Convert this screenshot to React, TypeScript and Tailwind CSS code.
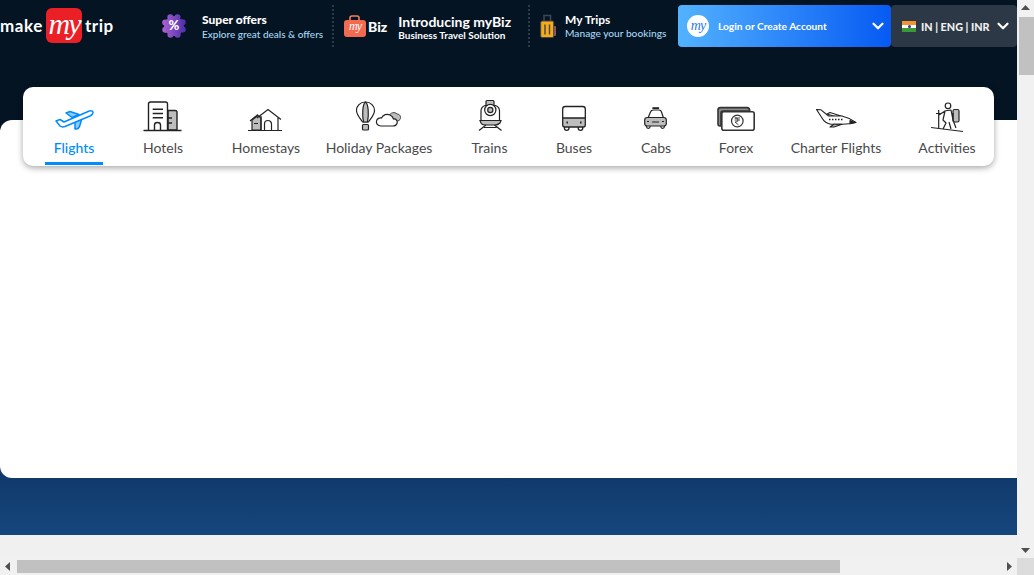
import React from 'react';
import { ChevronDown } from 'lucide-react';

const ink = '#222';
const grey = '#bdbdbd';

function FlightsIcon() {
  return (
    <svg width="40" height="36" viewBox="54 98 40 36" fill="none" stroke="#008cff" strokeWidth="1.5" strokeLinejoin="round">
      <g transform="translate(54 107)">
        <path d="M12 6 L16 4.5 L25 7.5 L18 10.5 Z" fill="#8ccbff" />
        <path d="M21 14 L28 11 L26 18 Q25 22 22 22 L21 22 Z" fill="#8ccbff" />
        <path d="M2 14 L6 12.5 L10 15 L33 5 Q38 2.5 39 5 Q39.5 7 36 9 L11 19.5 Q8 20.5 6 19 Z" fill="#fff" />
      </g>
    </svg>
  );
}

function HotelsIcon() {
  return (
    <svg width="40" height="36" viewBox="143 98 40 36" fill="none" stroke={ink} strokeWidth="1.4">
      <path d="M168 110.5 H175 Q177 110.5 177 112.5 V130 H168 Z" fill={grey} />
      <path d="M148.5 130 V104 Q148.5 102 150.5 102 H165.5 Q167.5 102 167.5 104 V130" />
      <path d="M152.7 109.3 H163 M152.7 113.5 H163 M152.7 117.7 H163 M168 118 H172 M168 123 H172" />
      <path d="M154.5 130 V125 Q154.5 122.5 157.5 122.5 Q160.5 122.5 160.5 125 V130" />
      <path d="M143.5 130.5 H181.5" />
    </svg>
  );
}

function HomestaysIcon() {
  return (
    <svg width="36" height="36" viewBox="248 98 36 36" fill="none" stroke={ink} strokeWidth="1.2">
      <path d="M252 130 V120 L258 115.5 L261 118 V130 Z" fill={grey} />
      <path d="M250 121 L258 114.5 M254 123.5 H258" />
      <path d="M257 118 L268 109.5 L281 119.5 M261 116 V130 M278 117 V130" />
      <path d="M264.5 130 V124 a3.5 3.5 0 0 1 7 0 V130" />
      <path d="M248 130.5 H282" />
    </svg>
  );
}

function HolidayIcon() {
  return (
    <svg width="46" height="36" viewBox="357 98 46 36" fill="none" stroke={ink} strokeWidth="1.2">
      <path d="M366.5 102 C361 102 357.5 106 357.5 110.5 C357.5 115 361 118 363.5 122 H369.5 C372 118 375.5 115 375.5 110.5 C375.5 106 372 102 366.5 102 Z" />
      <path d="M366.5 102 C363.5 104 363 115 364.5 122 H368.5 C370 115 369.5 104 366.5 102 Z" fill={grey} />
      <rect x="363.5" y="124.5" width="6" height="5.5" rx="1" fill={grey} />
      <path d="M390 116 C391 112.5 396 111.5 398 114 C401 114 402.5 117 401 119.5 C400 121 398 121.3 396 121 Z" fill={grey} strokeWidth="0.8" />
      <path d="M382 126 C378.5 126 377 123.5 377.5 121 C378 118.5 380.5 117.5 382.5 118 C384 114.5 388 113.5 391 115 C393 116 394 117.5 394.5 119 C397 118.5 399 121 398 123.5 C397 126 395 126 394 126 Z" fill="#fff" />
    </svg>
  );
}

function TrainsIcon() {
  return (
    <svg width="24" height="36" viewBox="477 98 24 36" fill="none" stroke={ink} strokeWidth="1.2">
      <path d="M485 105 V101.5 Q485 100.5 486 100.5 H492 Q493 100.5 493 101.5 V105" fill={grey} />
      <path d="M480 121 V111 Q480 107 484 105.5 H494.5 Q498.5 107 498.5 111 V121 Z" fill="#fff" />
      <circle cx="489.3" cy="110" r="5.6" fill="#fff" />
      <circle cx="489.3" cy="110" r="2.6" fill={grey} />
      <path d="M479 120.5 H500 L499 123 Q497 125 494 125 H484 Q481 125 480 123 Z" fill={grey} />
      <path d="M485 125 L478 130.5 M493.5 125 L500.5 130.5 M483 127.5 H495.5" />
    </svg>
  );
}

function BusesIcon() {
  return (
    <svg width="26" height="36" viewBox="561 98 26 36" fill="none" stroke={ink} strokeWidth="1.3">
      <circle cx="566.7" cy="128" r="2.3" fill="#fff" />
      <circle cx="580.5" cy="128" r="2.3" fill="#fff" />
      <path d="M562.7 118 V109 Q562.7 106.5 565.2 106.5 H582.8 Q585.3 106.5 585.3 109 V118" />
      <path d="M562.7 118 H585.3 V125 Q585.3 127 583.3 127 H564.7 Q562.7 127 562.7 125 Z" fill={grey} />
      <path d="M566.5 122.5 H568 M580 122.5 H581.5" strokeWidth="2" />
    </svg>
  );
}

function CabsIcon() {
  return (
    <svg width="24" height="36" viewBox="644 98 24 36" fill="none" stroke={ink} strokeWidth="1.2">
      <path d="M653 109 V107.8 H658.5 V109" fill={ink} />
      <path d="M648 118 L650.5 112 Q651 110 653.5 110 H659 Q661 110 661.5 112 L663.5 118" fill="#fff" />
      <circle cx="648.3" cy="126.5" r="1.8" fill="#fff" />
      <circle cx="662.6" cy="126.5" r="1.8" fill="#fff" />
      <rect x="644.7" y="117.5" width="21.6" height="8.5" rx="2.5" fill={grey} />
      <path d="M652 122 H659 M647 121.5 H649 M662 121.5 H664" />
    </svg>
  );
}

function ForexIcon() {
  return (
    <svg width="40" height="36" viewBox="716 98 40 36" fill="none" stroke="#333" strokeWidth="1.6">
      <path d="M721 126 H720 Q718 126 718 124 V110 Q718 107.6 720.5 107.6 H747 Q749.5 107.6 749.8 111 H723 Q721 111 721 113 Z" fill="#8d8d8d" />
      <rect x="721.8" y="111.8" width="32.4" height="18.4" rx="2" fill="#fff" />
      <circle cx="737.3" cy="121" r="5.8" strokeWidth="1.2" />
      <path d="M734.6 118 H740 M734.6 120 H740 M735 118 H736 a2 2 0 0 1 0 4 H735 L738.5 125" strokeWidth="0.9" />
    </svg>
  );
}

function CharterIcon() {
  return (
    <svg width="42" height="36" viewBox="815 98 42 36" fill="none" stroke={ink} strokeWidth="1.1" strokeLinejoin="round">
      <path d="M827 114 L830 112.5 L841 116 L835 116.5 Z" fill="#fff" />
      <path d="M816.5 109.5 L821 109.8 L828.5 116 L842 116 Q850 118 856 122.5 Q850 124.2 842 124.2 L831 124.2 Q825 123.5 822 118 Z" fill="#fff" />
      <path d="M830 127 L834 124.2 L842 124.2 L834 127 Z" fill={grey} />
      <path d="M829 119.5 H843" strokeDasharray="1.5 1.5" strokeWidth="1.4" />
      <path d="M850 120.5 L855 122.5 L850 123.6 Z" fill={ink} />
    </svg>
  );
}

function ActivitiesIcon() {
  return (
    <svg width="34" height="36" viewBox="932 98 34 36" fill="none" stroke={ink} strokeWidth="1.2" strokeLinejoin="round">
      <circle cx="950" cy="105.8" r="2.8" />
      <rect x="955" y="109.5" width="6" height="12.5" rx="1.5" fill={grey} />
      <path d="M946.5 111 L953 110 L955 120 L958 128 M947 111 L945 120 L948 123 L945 129 M951 122 L953 129 M947 111 L941 115 M955 113 V120" />
      <path d="M940.7 110 V128 M938 113.5 H943" />
      <path d="M933 127.5 L965 131.5" />
    </svg>
  );
}

const tabs = [
  { label: 'Flights', width: 'w-[58px]', icon: <FlightsIcon />, active: true },
  { label: 'Hotels', width: 'w-[120px]', icon: <HotelsIcon /> },
  { label: 'Homestays', width: 'w-[86px]', icon: <HomestaysIcon /> },
  { label: 'Holiday Packages', width: 'w-[140px]', icon: <HolidayIcon /> },
  { label: 'Trains', width: 'w-[81px]', icon: <TrainsIcon /> },
  { label: 'Buses', width: 'w-[88px]', icon: <BusesIcon /> },
  { label: 'Cabs', width: 'w-[76px]', icon: <CabsIcon /> },
  { label: 'Forex', width: 'w-[84px]', icon: <ForexIcon /> },
  { label: 'Charter Flights', width: 'w-[116px]', icon: <CharterIcon /> },
  { label: 'Activities', width: 'w-[94px] ml-[6px]', icon: <ActivitiesIcon /> },
];

function Logo() {
  return (
    <div className="flex items-center w-[162px] h-[35px] text-white text-[17px] font-bold tracking-[0.6px]">
      <span className="w-[46px]">make</span>
      <span className="w-[36px] h-[35px] rounded-md bg-[#eb2026] flex items-center justify-center text-[30px] leading-none italic font-normal font-['Liberation_Serif'] pb-1 tracking-[-2px]">
        my
      </span>
      <span className="ml-[3px] tracking-[0.5px]">trip</span>
    </div>
  );
}

function OffersBadge() {
  const lobes = [22, 67, 112, 157, 202, 247, 292, 337];
  return (
    <svg width="26" height="26" viewBox="0 0 26 26">
      <defs>
        <linearGradient id="badge" x1="0" y1="0" x2="1" y2="0">
          <stop offset="0" stopColor="#ad62d3" />
          <stop offset="1" stopColor="#4a2fa9" />
        </linearGradient>
      </defs>
      <path
        fill="url(#badge)"
        d={lobes
          .map((deg) => {
            const a = (deg * Math.PI) / 180;
            const x = 13 + 9.5 * Math.cos(a);
            const y = 13 + 9.5 * Math.sin(a);
            return `M${x - 3} ${y} a3 3 0 1 0 6 0 a3 3 0 1 0 -6 0 Z`;
          })
          .join(' ') + ' M3 13 a10 10 0 1 0 20 0 a10 10 0 1 0 -20 0 Z'}
      />
    </svg>
  );
}

function Dots() {
  return <div className="h-[42px] border-l-2 border-dotted border-[#2c3a4a]" />;
}

function BizIcon() {
  return (
    <div className="relative w-[24px] h-[23px] shrink-0">
      <svg width="24" height="23" viewBox="0 0 24 23" fill="none" className="absolute inset-0">
        <path d="M7 6 V3 Q7 1 9 1 H14 Q16 1 16 3 V6" stroke="#f27f5f" strokeWidth="1.6" />
        <rect x="1" y="5" width="22" height="17" rx="3" fill="#f26a50" />
      </svg>
      <span className="absolute inset-0 pt-[5px] text-center text-white text-[12px] leading-none italic font-['Liberation_Serif'] tracking-[-1px]">
        my
      </span>
    </div>
  );
}

function TripsIcon() {
  return (
    <svg width="16" height="25" viewBox="0 0 16 25" fill="none">
      <path d="M4 8 V1.5 H10.5 V8" stroke="#3d4557" strokeWidth="1.6" />
      <rect x="13" y="12" width="3" height="10" rx="1" fill="#8a5a60" />
      <rect x="0.7" y="7" width="13" height="16.5" rx="1.5" fill="#f8ab12" stroke="#3d4557" strokeWidth="1" />
      <path d="M5 10.5 V20.5 M9.5 10.5 V20.5" stroke="#3d4557" strokeWidth="1.4" />
    </svg>
  );
}

function FlagIcon() {
  return (
    <div className="w-[14px] h-[11px] flex flex-col shrink-0">
      <div className="h-[4px] bg-[#f59331]" />
      <div className="h-[3px] bg-white flex items-center justify-center">
        <div className="w-[3px] h-[3px] rounded-full bg-[#2b3a8c]" />
      </div>
      <div className="h-[4px] bg-[#3c9a36]" />
    </div>
  );
}

function ScrollArrow({ points }: { points: string }) {
  return (
    <svg width="17" height="17" viewBox="0 0 17 17" className="shrink-0">
      <polygon points={points} fill="#505050" />
    </svg>
  );
}

export default function App() {
  return (
    <div className="h-screen w-full overflow-hidden flex flex-col bg-[#f0f0f0] font-['Lato','Noto_Sans',sans-serif]">
      <div className="flex flex-1 min-h-0">
        <main className="w-[1017px] shrink-0">
          <div className="h-[535px] bg-[linear-gradient(to_bottom,#051423_300px,#113a6c_300px,#113a6c_478px,#15467c_535px)]">
            {/* Header */}
            <header className="h-[87px] flex items-start pt-[5px]">
              <div className="pt-[3px]">
                <Logo />
              </div>
              <div className="w-[170px] h-[42px] flex items-center gap-[15px]">
                <div className="relative w-[26px] h-[26px] -ml-[1px]">
                  <OffersBadge />
                  <span className="absolute inset-0 flex items-center justify-center text-white text-[13px] font-black">%</span>
                </div>
                <div className="pt-[2px]">
                  <p className="text-white text-[12px] font-black leading-[14px]">Super offers</p>
                  <p className="text-[#a5d8f5] text-[10px] font-medium leading-[14px] whitespace-nowrap">Explore great deals &amp; offers</p>
                </div>
              </div>
              <Dots />
              <div className="w-[194px] h-[42px] flex items-center pl-[9px]">
                <BizIcon />
                <span className="ml-[1px] text-white text-[14px] font-black">Biz</span>
                <div className="ml-[11px] pt-[2px]">
                  <p className="text-white text-[14px] font-bold leading-[15px] whitespace-nowrap">Introducing myBiz</p>
                  <p className="text-white text-[10px] font-bold leading-[12px] whitespace-nowrap">Business Travel Solution</p>
                </div>
              </div>
              <Dots />
              <div className="w-[148px] h-[42px] flex items-center pl-[10px] gap-[9px]">
                <TripsIcon />
                <div>
                  <p className="mt-[1px] text-white text-[12px] font-bold leading-[13px]">My Trips</p>
                  <p className="text-[#a5d8f5] text-[10.2px] font-medium leading-[14px] whitespace-nowrap">Manage your bookings</p>
                </div>
              </div>
              <button className="w-[213px] h-[42px] flex items-center pl-[9px] pr-[4px] rounded bg-[linear-gradient(to_right,#53b2fe,#065af3)] text-white">
                <div className="w-[22px] h-[22px] rounded-full bg-white flex items-center justify-center text-[#2e7de8] text-[14px] italic font-['Liberation_Serif'] tracking-[-1px] pb-[2px]">
                  my
                </div>
                <span className="ml-[9px] pt-[1px] text-[10.2px] font-bold">Login or Create Account</span>
                <ChevronDown className="ml-auto w-[18px] h-[18px]" strokeWidth={3} />
              </button>
              <button className="w-[126px] h-[42px] flex items-center pl-[11px] pr-[5px] rounded bg-[#2c3846] text-[#f0f0f0]">
                <FlagIcon />
                <span className="ml-[5px] pt-[2px] text-[10.8px] font-black whitespace-nowrap">IN | ENG | INR</span>
                <ChevronDown className="ml-auto w-[18px] h-[18px] text-white" strokeWidth={3} />
              </button>
            </header>

            {/* Travel tabs */}
            <nav className="relative z-10 ml-[23px] w-[971px] h-[79px] pl-[22px] flex bg-white rounded-[10px] shadow-[0_2px_6px_rgba(0,0,0,0.35)]">
              {tabs.map((tab) => (
                <div key={tab.label} className={`${tab.width} shrink-0 h-full pt-[11px] flex flex-col items-center`}>
                  <div className="h-[36px] flex justify-center">{tab.icon}</div>
                  <span
                    className={`mt-[5px] text-[14px] leading-[17px] whitespace-nowrap ${
                      tab.active ? 'text-[#008cff] font-medium' : 'text-[#4a4a4a]'
                    }`}
                  >
                    {tab.label}
                  </span>
                  {tab.active && <div className="mt-[6px] w-full h-[3px] bg-[#008cff]" />}
                </div>
              ))}
            </nav>

            <div className="-mt-[46px] h-[358px] bg-white rounded-l-xl" />
          </div>
        </main>

        {/* Vertical scrollbar */}
        <div className="flex-1 flex flex-col bg-[#f1f1f1]">
          <ScrollArrow points="8.5,5 13,10 4,10" />
          <div className="ml-[2px] h-[58px] bg-[#c1c1c1]" />
          <div className="flex-1" />
          <ScrollArrow points="4,7 13,7 8.5,12" />
        </div>
      </div>

      {/* Horizontal scrollbar */}
      <div className="h-[17px] flex shrink-0 bg-[#f1f1f1]">
        <ScrollArrow points="10,4 10,13 5,8.5" />
        <div className="mt-[2px] w-[823px] h-[13px] bg-[#c1c1c1]" />
        <div className="flex-1 flex justify-end">
          <ScrollArrow points="7,4 12,8.5 7,13" />
        </div>
        <div className="w-[17px] bg-[#dcdcdc]" />
      </div>
    </div>
  );
}
